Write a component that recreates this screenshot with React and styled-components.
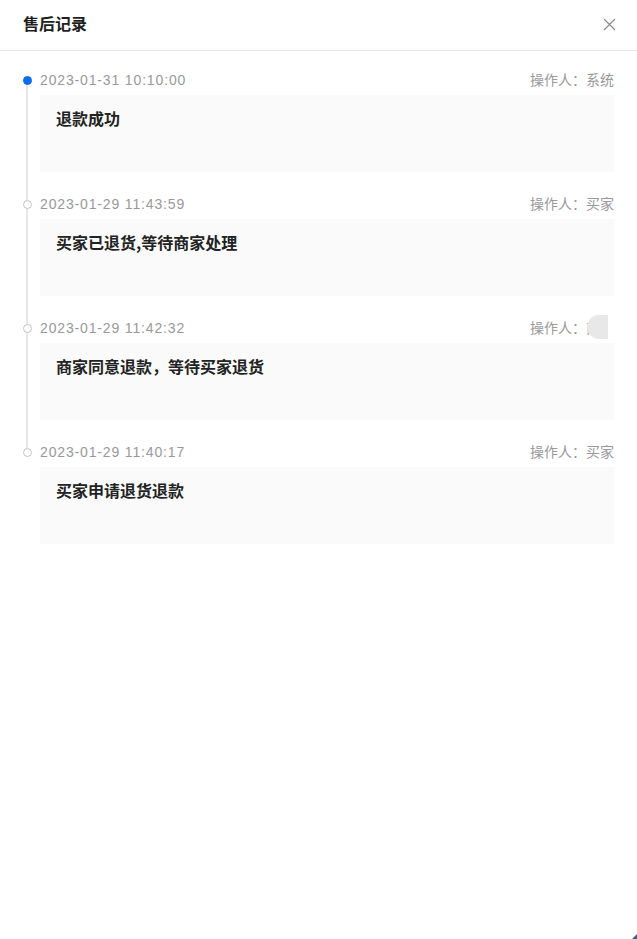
import React from "react";
import styled, { createGlobalStyle } from "styled-components";

const GlobalStyle = createGlobalStyle`
    html, body {
        margin: 0;
        padding: 0;
        background: #ffffff;
    }
    body {
        font-family: "Liberation Sans", "Noto Sans CJK SC", sans-serif;
    }
`

const Drawer = styled.div`
    position: relative;
    width: 637px;
    height: 939px;
    background: #ffffff;
    overflow: hidden;
`

const Header = styled.div`
    height: 50px;
    display: flex;
    align-items: center;
    justify-content: space-between;
    padding: 0 22px 0 23px;
    border-bottom: 1px solid #e8e8e8;
    box-sizing: content-box;
`

const Title = styled.div`
    font-size: 16px;
    font-weight: 600;
    line-height: 20px;
    color: #1f1f1f;
    font-family: "Noto Sans CJK SC", sans-serif;
    margin-top: -5px;
`

const CloseButton = styled.button`
    border: none;
    background: none;
    padding: 0;
    width: 14px;
    height: 14px;
    display: flex;
    align-items: center;
    justify-content: center;
    cursor: pointer;
    margin-top: -2px;
    margin-right: -1px;
`

const Timeline = styled.div`
    padding: 19px 23px 0 19px;
    display: flex;
    flex-direction: column;
`

const Item = styled.div`
    position: relative;
    display: flex;
    padding-bottom: 22px;

    &:last-child {
        padding-bottom: 0;
    }
`

const Rail = styled.div`
    position: relative;
    width: 21px;
    flex-shrink: 0;
`

const Dot = styled.span`
    position: absolute;
    left: 3.5px;
    top: 5.5px;
    width: 9px;
    height: 9px;
    border-radius: 50%;
    box-sizing: border-box;
    background: ${p => p.$active ? "#0a6cf5" : "#ffffff"};
    border: ${p => p.$active ? "0.5px solid #0a6cf5" : "1.5px solid #c4c4c4"};
    z-index: 1;
`

const Line = styled.span`
    position: absolute;
    left: 7px;
    top: 14px;
    width: 2px;
    height: 120px;
    background: #e6e6e6;
`

const Body = styled.div`
    flex: 1;
    display: flex;
    flex-direction: column;
`

const Meta = styled.div`
    height: 20px;
    display: flex;
    align-items: center;
    justify-content: space-between;
    font-size: 14px;
    line-height: 20px;
    color: #999999;
`

const Time = styled.span`
    letter-spacing: 0.85px;
`

const Operator = styled.span`
    display: flex;
    align-items: center;
    height: 20px;
    font-family: "Noto Sans CJK SC", sans-serif;
    line-height: 18px;
    margin-top: -2px;
`

const MaskedName = styled.span`
    position: relative;
    display: inline-block;
    width: 28px;
    white-space: nowrap;

    &::before {
        content: "";
        position: absolute;
        left: 1px;
        top: -3px;
        width: 21px;
        height: 24px;
        background: #e8e8e8;
        border-radius: 12px 0 0 12px;
    }

    &::after {
        content: "";
        position: absolute;
        right: 0;
        top: -3px;
        width: 6px;
        height: 24px;
        background: #ffffff;
    }
`

const Card = styled.div`
    margin-top: 5px;
    height: 77px;
    box-sizing: border-box;
    padding: 14px 16px;
    background: #fafafa;
    font-family: "Noto Sans CJK SC", sans-serif;
    font-size: 16px;
    font-weight: 600;
    line-height: 18px;
    color: #222222;
`

const Corner = styled.span`
    position: absolute;
    right: 0;
    bottom: 0;
    width: 0;
    height: 0;
    border-left: 5px solid transparent;
    border-bottom: 5px solid #3a5f80;
`

const records = [
    { time: "2023-01-31 10:10:00", operator: "系统", text: "退款成功", active: true },
    { time: "2023-01-29 11:43:59", operator: "买家", text: "买家已退货,等待商家处理" },
    { time: "2023-01-29 11:42:32", operator: "商家", text: "商家同意退款，等待买家退货", masked: true },
    { time: "2023-01-29 11:40:17", operator: "买家", text: "买家申请退货退款" },
]

export default function App() {
    return (
        <>
            <GlobalStyle />
            <Drawer>
                <Header>
                    <Title>售后记录</Title>
                    <CloseButton aria-label="close">
                        <svg width="13" height="13" viewBox="0 0 13 13">
                            <path d="M1 1 L12 12 M12 1 L1 12" stroke="#8c8c8c" strokeWidth="1.2" fill="none" />
                        </svg>
                    </CloseButton>
                </Header>
                <Timeline>
                    {records.map((r, i) => (
                        <Item key={i}>
                            <Rail>
                                <Dot $active={r.active} />
                                {i < records.length - 1 && <Line />}
                            </Rail>
                            <Body>
                                <Meta>
                                    <Time>{r.time}</Time>
                                    <Operator>
                                        操作人：
                                        {r.masked
                                            ? <MaskedName>{r.operator}</MaskedName>
                                            : r.operator}
                                    </Operator>
                                </Meta>
                                <Card>{r.text}</Card>
                            </Body>
                        </Item>
                    ))}
                </Timeline>
                <Corner />
            </Drawer>
        </>
    )
}
